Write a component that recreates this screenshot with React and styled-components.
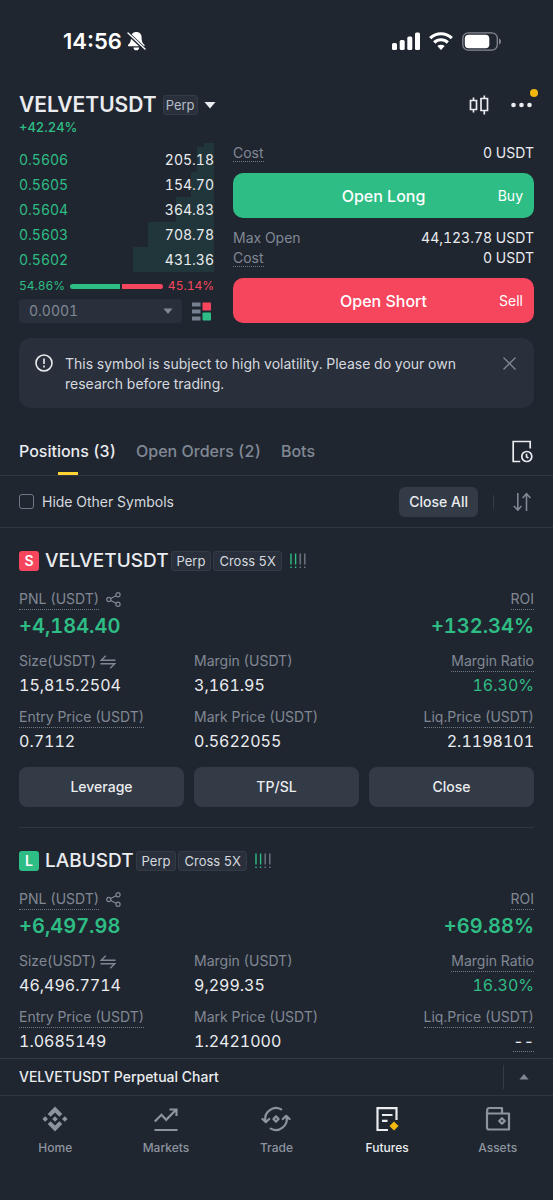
import React from "react";
import styled, { createGlobalStyle } from "styled-components";

const COLORS = {
  bg: "#202630",
  card: "#29303c",
  button: "#333b47",
  line: "#2f3742",
  text: "#eaecef",
  muted: "#808894",
  dim: "#6f7885",
  nav: "#8d949e",
  green: "#2ebd85",
  red: "#f6465d",
  yellow: "#f0b90b",
};

const GlobalStyle = createGlobalStyle`
  *, *::before, *::after {
    box-sizing: border-box;
  }
  body {
    margin: 0;
    background: ${COLORS.bg};
    color: ${COLORS.text};
    font-family: Inter, "Liberation Sans", sans-serif;
    font-size: 14px;
    line-height: 20px;
    font-variant-numeric: tabular-nums;
  }
  button, select, input {
    font: inherit;
    font-variant-numeric: inherit;
    color: inherit;
    margin: 0;
  }
  button {
    padding: 0;
    border: none;
    background: none;
    cursor: pointer;
  }
  h1, h2, p, dl, dd {
    margin: 0;
  }
  svg {
    display: block;
    flex: none;
  }
`;

const Page = styled.div`
  min-height: 100vh;
  display: flex;
  flex-direction: column;
`;

const StatusBar = styled.div`
  height: 82px;
  padding: 0 51px 0 63px;
  display: flex;
  align-items: center;
  gap: 9px;
`;

const Clock = styled.span`
  display: flex;
  align-items: center;
  gap: 5px;
  margin-right: auto;
  font-size: 22px;
  font-weight: 600;
  font-variant-numeric: normal;
  color: #fff;
`;

const Header = styled.header`
  padding: 11px 19px 0;
`;

const HeaderRow = styled.div`
  height: 24px;
  padding-right: 2px;
  display: flex;
  align-items: center;
`;

const PairButton = styled.button`
  display: flex;
  align-items: center;
  gap: 6px;
  margin-right: auto;
`;

const Symbol = styled.h1`
  font-size: 21px;
  line-height: 24px;
  font-weight: 600;
`;

const Tag = styled.span`
  height: 20px;
  padding: 0 ${(props) => (props.$small ? "2px" : "5px")};
  display: flex;
  align-items: center;
  border: 1px solid #333b47;
  border-radius: 3px;
  background: ${COLORS.card};
  font-size: 13px;
  font-weight: 400;
  color: ${(props) => (props.$small ? "#b7bdc6" : "#d5d9df")};
`;

const IconButton = styled.button`
  position: relative;
  display: flex;
  color: ${(props) => props.$color || COLORS.text};
`;

const MenuButton = styled(IconButton)`
  margin-left: 22px;
`;

const Dot = styled.span`
  position: absolute;
  top: -13px;
  right: -6px;
  width: 8px;
  height: 8px;
  border-radius: 50%;
  background: ${COLORS.yellow};
`;

const Change = styled.p`
  font-size: 13px;
  font-weight: 500;
  color: ${COLORS.green};
`;

const TradePanel = styled.section`
  padding: 6px 19px 0;
  display: grid;
  grid-template-columns: 195fr 301fr;
  gap: 19px;
`;

const DepthEdge = styled.div`
  height: 4px;
  margin-left: auto;
  background: #21363a;
`;

const Book = styled.table`
  width: 100%;
  border-collapse: collapse;
  font-size: 14px;

  td {
    height: 25px;
    padding: 0;
  }
  td:first-child {
    color: ${COLORS.green};
  }
  td:last-child {
    text-align: right;
  }
`;

const Ratio = styled.div`
  margin-top: 4px;
  display: flex;
  align-items: center;
  gap: 5px;
  font-size: 12px;
`;

const RatioText = styled.span`
  color: ${(props) => props.$color};
`;

const RatioBar = styled.div`
  flex: 1;
  display: flex;
  gap: 2px;
`;

const RatioPart = styled.span`
  height: 5px;
  background: ${(props) => props.$color};

  &:first-child {
    border-radius: 3px 0 0 3px;
  }
  &:last-child {
    border-radius: 0 3px 3px 0;
  }
`;

const StepRow = styled.div`
  margin-top: 3px;
  display: flex;
  align-items: center;
  gap: 10px;
  padding-right: 3px;
`;

const SelectBox = styled.div`
  position: relative;
  flex: 1;

  select {
    width: 100%;
    height: 24px;
    padding: 0 10px;
    display: block;
    appearance: none;
    border: none;
    border-radius: 4px;
    background: ${COLORS.card};
    color: ${COLORS.muted};
  }
  svg {
    position: absolute;
    right: 9px;
    top: 9px;
    pointer-events: none;
    color: ${COLORS.muted};
  }
`;

const InfoRow = styled.div`
  display: flex;
  justify-content: space-between;
`;

const Label = styled.span`
  color: ${COLORS.muted};
  border-bottom: 1px ${(props) => (props.$dotted ? `dotted ${COLORS.dim}` : "solid transparent")};
`;

const CostLabel = styled(Label)`
  line-height: 17px;
  align-self: center;
`;

const OrderButton = styled.button`
  width: 100%;
  height: 45px;
  margin: 10px 0;
  padding: 0 11px;
  display: grid;
  grid-template-columns: 1fr auto 1fr;
  align-items: center;
  border-radius: 10px;
  background: ${(props) => props.$color};
  font-size: 16px;
  font-weight: 500;
  color: #fff;

  small {
    font-size: 14px;
    font-weight: 400;
    text-align: right;
  }
  &:last-child {
    margin-bottom: 0;
  }
`;

const Notice = styled.section`
  margin: 15px 19px 0;
  padding: 16px 18px 14px 16px;
  display: flex;
  align-items: flex-start;
  gap: 12px;
  border-radius: 12px;
  background: ${COLORS.card};

  p {
    flex: 1;
    padding-right: 24px;
    color: #d5d9df;
  }
  ${IconButton} {
    margin-top: 3px;
  }
`;

const Tabs = styled.nav`
  margin-top: 19px;
  padding: 0 20px 0 19px;
  height: 49px;
  display: flex;
  align-items: center;
  gap: 20px;
  border-bottom: 1px solid ${COLORS.line};

  ${IconButton} {
    margin-left: auto;
  }
`;

const Tab = styled.button`
  position: relative;
  height: 48px;
  font-size: 16px;
  font-weight: 500;
  color: ${(props) => (props.$active ? COLORS.text : COLORS.muted)};

  &::after {
    content: "";
    display: ${(props) => (props.$active ? "block" : "none")};
    position: absolute;
    left: calc(50% - 10px);
    bottom: 0;
    width: 20px;
    height: 3px;
    background: #fcd535;
  }
`;

const Filters = styled.div`
  height: 52px;
  padding: 0 22px 0 19px;
  display: flex;
  align-items: center;
  border-bottom: 1px solid ${COLORS.line};
`;

const Check = styled.label`
  margin-right: auto;
  display: flex;
  align-items: center;
  gap: 8px;
  color: #d5d9df;

  input {
    width: 15px;
    height: 15px;
    appearance: none;
    border: 1px solid ${COLORS.dim};
    border-radius: 3px;
  }
  input:checked {
    background: ${COLORS.muted};
  }
`;

const GreyButton = styled.button`
  height: ${(props) => (props.$small ? "30px" : "40px")};
  padding: 0 10px;
  border-radius: ${(props) => (props.$small ? "6px" : "8px")};
  background: ${COLORS.button};
  font-weight: 500;
`;

const Divider = styled.span`
  width: 1px;
  height: ${(props) => (props.$tall ? "24px" : "14px")};
  margin: 0 ${(props) => (props.$tall ? "15px" : "19px")} 0 15px;
  background: ${COLORS.button};
`;

const Card = styled.article`
  margin: 0 19px;
  padding: 22px 0 20px;
  border-bottom: 1px solid ${COLORS.line};

  &:last-child {
    padding-bottom: 0;
    border-bottom: none;
  }
`;

const CardTitle = styled.div`
  display: flex;
  align-items: center;
  gap: 2px;
  height: 22px;

  h2 {
    font-size: 19px;
    line-height: 20px;
    font-weight: 500;
  }
  svg {
    margin-left: 6px;
  }
`;

const Side = styled.span`
  width: 20px;
  height: 20px;
  margin-right: 4px;
  border-radius: 3px;
  background: ${(props) => props.$color};
  text-align: center;
  font-weight: 600;
  color: #fff;
`;

const Pnl = styled.dl`
  margin-top: 17px;
  display: flex;
  justify-content: space-between;

  > div:last-child {
    text-align: right;
  }
  dt {
    display: flex;
    align-items: center;
    gap: 7px;
    color: ${COLORS.muted};
  }
  > div:last-child dt {
    justify-content: flex-end;
  }
  dd {
    margin-top: 4px;
    font-size: 20px;
    line-height: 24px;
    font-weight: 600;
    color: ${COLORS.green};
  }
`;

const Stats = styled.dl`
  margin-top: 13px;
  display: grid;
  grid-template-columns: repeat(3, 1fr);
  gap: 12px 10px;

  dt {
    display: flex;
    align-items: center;
    gap: 4px;
    white-space: nowrap;
    color: ${COLORS.muted};
  }
  dd {
    margin-top: 3px;
    font-size: 16px;
  }
  > div:nth-child(3n) {
    display: flex;
    flex-direction: column;
    align-items: flex-end;
  }
`;

const StatValue = styled.span`
  display: inline-block;
  color: ${(props) => (props.$green ? COLORS.green : COLORS.text)};
  border-bottom: ${(props) => (props.$dotted ? `1px dotted ${COLORS.dim}` : "none")};
`;

const Actions = styled.div`
  margin-top: 16px;
  display: grid;
  grid-template-columns: repeat(3, 1fr);
  gap: 10px;
`;

const Footer = styled.footer`
  margin-top: auto;
`;

const ChartBar = styled.div`
  height: 38px;
  padding: 0 24px 0 19px;
  display: flex;
  align-items: center;
  border-top: 1px solid ${COLORS.button};
  border-bottom: 1px solid ${COLORS.line};
  font-weight: 500;

  ${Divider} {
    margin-left: auto;
  }
`;

const BottomNav = styled.nav`
  height: 104px;
  padding-top: 10px;
  display: grid;
  grid-template-columns: repeat(5, 1fr);
`;

const NavLink = styled.a`
  display: flex;
  flex-direction: column;
  align-items: center;
  gap: 6px;
  text-decoration: none;
  font-size: 12px;
  font-weight: 500;
  color: ${(props) => (props.$active ? COLORS.text : COLORS.nav)};
`;

const Caret = ({ width = 10, height = 6, up }) => (
  <svg width={width} height={height} viewBox="0 0 10 6" fill="currentColor">
    <path d={up ? "M5 0l4.6 5.4H.4z" : "M.4.5h9.2L5 6z"} />
  </svg>
);

const BellOff = () => (
  <svg width="19" height="20" viewBox="0 0 19 20">
    <path
      d="M9.3 1C6 1 4 3.2 4 6.2c0 4.4-1 5.8-2.6 7.3-.8.8-.4 1.8.6 1.8h14.6c1 0 1.4-1 .6-1.8-1.6-1.5-2.6-2.9-2.6-7.3C14.6 3.2 12.6 1 9.3 1zM6.5 16.4h5.6a2.8 2.8 0 0 1-5.6 0z"
      fill="#fff"
    />
    <path d="M1 2.5l16.5 15.5" stroke={COLORS.bg} strokeWidth="3.6" />
    <path d="M1 2l17 16" stroke="#fff" strokeWidth="1.4" strokeLinecap="round" />
  </svg>
);

const Signal = () => (
  <svg width="28" height="18" viewBox="0 0 28 18" fill="#fff">
    <rect x="0" y="11" width="5" height="7" rx="1.5" />
    <rect x="7.7" y="8" width="5" height="10" rx="1.5" />
    <rect x="15.3" y="4.5" width="5" height="13.5" rx="1.5" />
    <rect x="23" y="0.5" width="5" height="17.5" rx="1.5" />
  </svg>
);

const Wifi = () => (
  <svg width="24" height="18" viewBox="0 0 24 18" fill="none" stroke="#fff" strokeWidth="3.2">
    <path d="M1.2 6.1a15.600 15.600 0 0 1 21.600 0" />
    <path d="M5.2 10.500a9.800 9.800 0 0 1 13.600 0" />
    <path d="M12 18l-3.700-3.900a5.400 5.400 0 0 1 7.400 0z" fill="#fff" stroke="none" />
  </svg>
);

const Battery = () => (
  <svg width="40" height="19" viewBox="0 0 40 19">
    <rect x=".8" y=".8" width="34.5" height="17.4" rx="5.5" fill="none" stroke="#858a92" strokeWidth="1.3" />
    <rect x="2.8" y="2.8" width="24.5" height="13.4" rx="3.8" fill="#fff" />
    <path d="M37 6.5c2.6 1 2.6 5 0 6z" fill="#858a92" />
  </svg>
);

const Candles = () => (
  <svg width="20" height="20" viewBox="0 0 20 20" fill="none" stroke="currentColor" strokeWidth="1.7">
    <path d="M1.500 5.500h6v9h-6zM4.500 2.500v3M4.500 14.500v3M12 3.500h6.500v12H12zM15.300.5v3M15.300 15.500v4" />
  </svg>
);

const More = () => (
  <svg width="21" height="6" viewBox="0 0 21 6" fill="currentColor">
    <circle cx="2.5" cy="3" r="2.3" />
    <circle cx="10.5" cy="3" r="2.3" />
    <circle cx="18.5" cy="3" r="2.3" />
  </svg>
);

const BookLayout = () => (
  <svg width="19" height="19" viewBox="0 0 19 19">
    <path d="M0 .5h8.500v4H0zM0 7.500h8.500v4H0zM0 14.500h8.500v4H0z" fill="#76808f" />
    <rect x="10.500" y=".5" width="8.500" height="8" rx=".8" fill={COLORS.red} />
    <rect x="10.500" y="10.500" width="8.500" height="8" rx=".8" fill={COLORS.green} />
  </svg>
);

const Alert = () => (
  <svg width="18" height="18" viewBox="0 0 18 18" fill="none" stroke={COLORS.text} strokeWidth="1.6">
    <circle cx="9" cy="9" r="8" />
    <path d="M9 4.500v5.500M9 11.600v1.900" />
  </svg>
);

const Cross = () => (
  <svg width="13" height="13" viewBox="0 0 13 13" stroke="currentColor" strokeWidth="1.3">
    <path d="M.5.5l12 12M12.500.5l-12 12" />
  </svg>
);

const History = () => (
  <svg width="21" height="23" viewBox="0 0 21 23" fill="none" stroke="currentColor" strokeWidth="1.7">
    <path d="M18.200 8.500V1.500H1.200v20h7" />
    <circle cx="14.800" cy="16.500" r="5" />
    <path d="M14.500 13.800v3l1.900 1.300" />
  </svg>
);

const Sort = () => (
  <svg width="18" height="20" viewBox="0 0 18 20" fill="none" stroke="currentColor" strokeWidth="1.6">
    <path d="M4.800 1v17M.8 14l4 4 3.700-4M13.500 19V2M9.600 6l3.900-4.200L17.400 6" />
  </svg>
);

const Share = () => (
  <svg width="15" height="15" viewBox="0 0 15 15" fill="none" stroke="currentColor" strokeWidth="1.2">
    <circle cx="2.800" cy="7.500" r="2.100" />
    <circle cx="12" cy="2.800" r="2.100" />
    <circle cx="12" cy="12.200" r="2.100" />
    <path d="M4.700 6.500l5.400-2.800M4.700 8.500l5.400 2.800" />
  </svg>
);

const Swap = () => (
  <svg width="16" height="14" viewBox="0 0 16 14" fill="none" stroke="currentColor" strokeWidth="1.4">
    <path d="M15.500 5.200H1.200L5.800.8M.5 8.800h14.300l-4.600 4.400" />
  </svg>
);

const RiskBars = () => (
  <svg width="17" height="16" viewBox="0 0 17 16" strokeWidth="1.4">
    <path d="M1 .5v11M1 13.500v1.500M5.600.5v11M5.600 13.500v1.500" stroke={COLORS.green} />
    <path d="M10.200.5v11M10.200 13.500v1.500M14.800.5v11M14.800 13.500v1.500" stroke={COLORS.dim} />
  </svg>
);

const HomeIcon = () => (
  <svg width="26" height="26" viewBox="0 0 26 26" fill="currentColor">
    <path d="M13 .6l7.300 7.300-2.900 2.900L13 6.400l-4.400 4.400-2.900-2.900zM13 25.400l7.300-7.300-2.900-2.900-4.400 4.400-4.400-4.400-2.900 2.900zM13 10.200l2.800 2.800-2.800 2.800-2.800-2.800zM3.200 10.200L6 13l-2.800 2.800L.4 13zM22.800 10.200l2.800 2.800-2.800 2.800L20 13z" />
  </svg>
);

const MarketsIcon = () => (
  <svg width="26" height="26" viewBox="0 0 26 26" fill="none" stroke="currentColor" strokeWidth="2.2">
    <path d="M1.500 24h23M1.800 15.600l6.700-6.800 4.700 5L22.800 4M16.500 3.500h7V10" />
  </svg>
);

const TradeIcon = () => (
  <svg
    width="30"
    height="26"
    viewBox="0 0 30 26"
    fill="none"
    stroke="currentColor"
    strokeWidth="2.2"
    strokeLinecap="round"
    strokeLinejoin="round"
  >
    <path d="M20.200 3.400A10.800 10.800 0 0 0 4.600 15.500M1.500 13l3.300 3.200L8.200 13" />
    <path d="M9.800 22.600A10.800 10.800 0 0 0 25.400 10.500M28.500 13l-3.300-3.200L21.800 13" />
    <path d="M15 10.400l2.600 2.600-2.600 2.600-2.600-2.600z" />
  </svg>
);

const FuturesIcon = () => (
  <svg width="26" height="26" viewBox="0 0 26 26" fill="none" stroke="currentColor" strokeWidth="2.2">
    <path d="M22.500 14V2.200H3.500v21.800h10.500M8 9h10.500M8 14.800h5.500" />
    <path d="M20 15.500l4.500 4.500-4.500 4.500-4.500-4.500z" fill={COLORS.yellow} stroke="none" />
  </svg>
);

const AssetsIcon = () => (
  <svg width="26" height="26" viewBox="0 0 26 26" fill="none" stroke="currentColor" strokeWidth="2.2" strokeLinejoin="round">
    <path d="M2 6.500V21.500a2 2 0 0 0 2 2h20V7.500H2.200V4a2 2 0 0 1 2-2H17v5" />
    <path d="M17 12.200l2.800 2.800-2.800 2.800-2.800-2.800z" />
  </svg>
);

const ORDERS = [
  { price: "0.5606", amount: "205.18", depth: 9 },
  { price: "0.5605", amount: "154.70", depth: 12 },
  { price: "0.5604", amount: "364.83", depth: 20 },
  { price: "0.5603", amount: "708.78", depth: 34 },
  { price: "0.5602", amount: "431.36", depth: 42 },
];

const POSITIONS = [
  {
    symbol: "VELVETUSDT",
    side: "S",
    pnl: "+4,184.40",
    roi: "+132.34%",
    size: "15,815.2504",
    margin: "3,161.95",
    ratio: "16.30%",
    entry: "0.7112",
    mark: "0.5622055",
    liq: "2.1198101",
    actions: true,
  },
  {
    symbol: "LABUSDT",
    side: "L",
    pnl: "+6,497.98",
    roi: "+69.88%",
    size: "46,496.7714",
    margin: "9,299.35",
    ratio: "16.30%",
    entry: "1.0685149",
    mark: "1.2421000",
    liq: "--",
  },
];

const NAV = [
  { name: "Home", Icon: HomeIcon },
  { name: "Markets", Icon: MarketsIcon },
  { name: "Trade", Icon: TradeIcon },
  { name: "Futures", Icon: FuturesIcon },
  { name: "Assets", Icon: AssetsIcon },
];

function OrderBook() {
  const [step, setStep] = React.useState("0.0001");

  return (
    <div>
      <DepthEdge style={{ width: "5%" }} />
      <Book>
        <tbody>
          {ORDERS.map(({ price, amount, depth }) => (
            <tr
              key={price}
              style={{
                background: `linear-gradient(to left, #21363a ${depth}%, transparent ${depth}%)`,
              }}
            >
              <td>{price}</td>
              <td>{amount}</td>
            </tr>
          ))}
        </tbody>
      </Book>
      <Ratio>
        <RatioText $color={COLORS.green}>54.86%</RatioText>
        <RatioBar>
          <RatioPart $color={COLORS.green} style={{ width: "54.86%" }} />
          <RatioPart $color={COLORS.red} style={{ width: "45.14%" }} />
        </RatioBar>
        <RatioText $color={COLORS.red}>45.14%</RatioText>
      </Ratio>
      <StepRow>
        <SelectBox>
          <select
            aria-label="Price step"
            value={step}
            onChange={(e) => setStep(e.target.value)}
          >
            <option>0.0001</option>
          </select>
          <Caret />
        </SelectBox>
        <IconButton aria-label="Order book layout">
          <BookLayout />
        </IconButton>
      </StepRow>
    </div>
  );
}

function Position(props) {
  const { position } = props;

  return (
    <Card>
      <CardTitle>
        <Side $color={position.side === "S" ? COLORS.red : COLORS.green}>
          {position.side}
        </Side>
        <h2>{position.symbol}</h2>
        <Tag>Perp</Tag>
        <Tag>Cross 5X</Tag>
        <RiskBars />
      </CardTitle>
      <Pnl>
        <div>
          <dt>
            <Label $dotted>PNL (USDT)</Label>
            <Share />
          </dt>
          <dd>{position.pnl}</dd>
        </div>
        <div>
          <dt>
            <Label $dotted>ROI</Label>
          </dt>
          <dd>{position.roi}</dd>
        </div>
      </Pnl>
      <Stats>
        <div>
          <dt>
            <Label>Size(USDT)</Label>
            <Swap />
          </dt>
          <dd>{position.size}</dd>
        </div>
        <div>
          <dt>
            <Label>Margin (USDT)</Label>
          </dt>
          <dd>{position.margin}</dd>
        </div>
        <div>
          <dt>
            <Label $dotted>Margin Ratio</Label>
          </dt>
          <dd>
            <StatValue $green>{position.ratio}</StatValue>
          </dd>
        </div>
        <div>
          <dt>
            <Label $dotted>Entry Price (USDT)</Label>
          </dt>
          <dd>{position.entry}</dd>
        </div>
        <div>
          <dt>
            <Label>Mark Price (USDT)</Label>
          </dt>
          <dd>{position.mark}</dd>
        </div>
        <div>
          <dt>
            <Label $dotted>Liq.Price (USDT)</Label>
          </dt>
          <dd>
            <StatValue $dotted={position.liq === "--"}>{position.liq}</StatValue>
          </dd>
        </div>
      </Stats>
      {position.actions && (
        <Actions>
          <GreyButton>Leverage</GreyButton>
          <GreyButton>TP/SL</GreyButton>
          <GreyButton>Close</GreyButton>
        </Actions>
      )}
    </Card>
  );
}

function App() {
  const [hideOthers, setHideOthers] = React.useState(false);

  return (
    <Page>
      <GlobalStyle />
      <StatusBar>
        <Clock>
          14:56
          <BellOff />
        </Clock>
        <Signal />
        <Wifi />
        <Battery />
      </StatusBar>

      <Header>
        <HeaderRow>
          <PairButton>
            <Symbol>VELVETUSDT</Symbol>
            <Tag $small>Perp</Tag>
            <Caret width={12} height={8} />
          </PairButton>
          <IconButton aria-label="Chart">
            <Candles />
          </IconButton>
          <MenuButton aria-label="More">
            <More />
            <Dot />
          </MenuButton>
        </HeaderRow>
        <Change>+42.24%</Change>
      </Header>

      <TradePanel>
        <OrderBook />
        <div>
          <InfoRow>
            <CostLabel $dotted>Cost</CostLabel>
            <span>0 USDT</span>
          </InfoRow>
          <OrderButton $color={COLORS.green}>
            <span />
            Open Long
            <small>Buy</small>
          </OrderButton>
          <InfoRow>
            <CostLabel>Max Open</CostLabel>
            <span>44,123.78 USDT</span>
          </InfoRow>
          <InfoRow>
            <CostLabel $dotted>Cost</CostLabel>
            <span>0 USDT</span>
          </InfoRow>
          <OrderButton $color={COLORS.red}>
            <span />
            Open Short
            <small>Sell</small>
          </OrderButton>
        </div>
      </TradePanel>

      <Notice>
        <Alert />
        <p>
          This symbol is subject to high volatility. Please do your own research
          before trading.
        </p>
        <IconButton aria-label="Dismiss" $color={COLORS.muted}>
          <Cross />
        </IconButton>
      </Notice>

      <Tabs>
        <Tab $active>Positions (3)</Tab>
        <Tab>Open Orders (2)</Tab>
        <Tab>Bots</Tab>
        <IconButton aria-label="History">
          <History />
        </IconButton>
      </Tabs>

      <Filters>
        <Check>
          <input
            type="checkbox"
            checked={hideOthers}
            onChange={(e) => setHideOthers(e.target.checked)}
          />
          Hide Other Symbols
        </Check>
        <GreyButton $small>Close All</GreyButton>
        <Divider />
        <IconButton aria-label="Sort" $color={COLORS.muted}>
          <Sort />
        </IconButton>
      </Filters>

      <main>
        {POSITIONS.map((position) => (
          <Position key={position.symbol} position={position} />
        ))}
      </main>

      <Footer>
        <ChartBar>
          VELVETUSDT Perpetual Chart
          <Divider $tall />
          <IconButton aria-label="Expand chart" $color={COLORS.muted}>
            <Caret up />
          </IconButton>
        </ChartBar>
        <BottomNav>
          {NAV.map(({ name, Icon }) => (
            <NavLink key={name} href="#" $active={name === "Futures"}>
              <Icon />
              {name}
            </NavLink>
          ))}
        </BottomNav>
      </Footer>
    </Page>
  );
}

export default App;
